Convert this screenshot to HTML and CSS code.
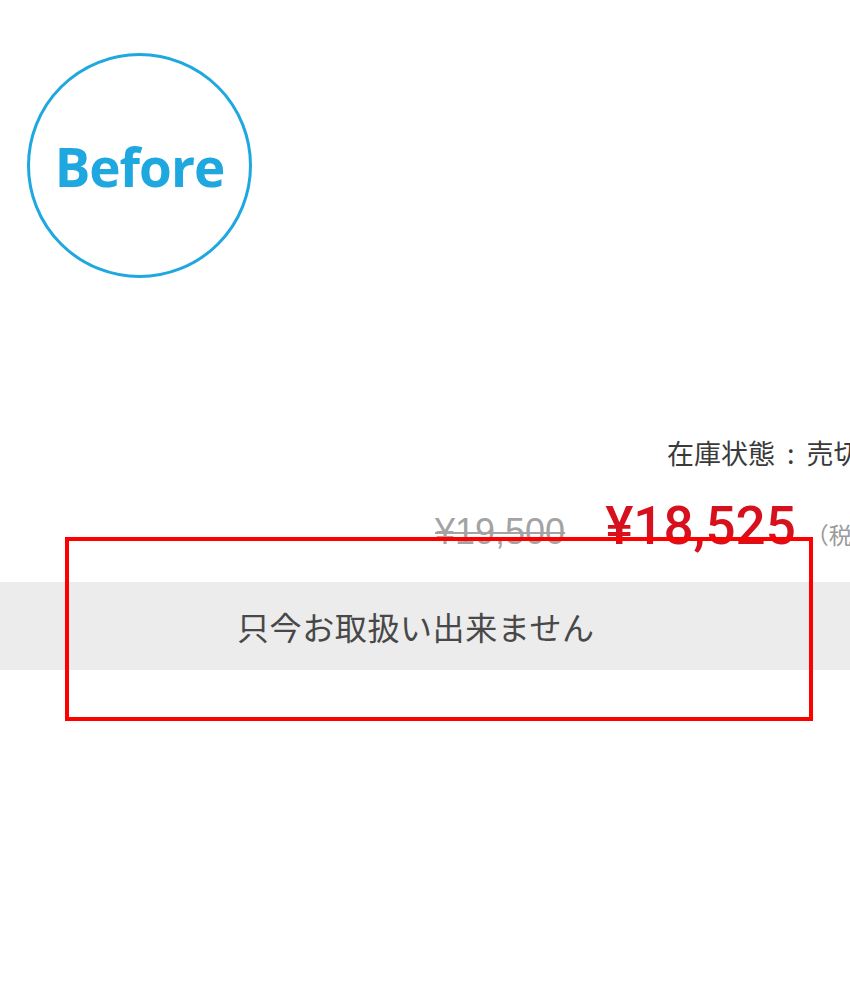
FILE: index.html
```html
<!DOCTYPE html>
<html lang="ja">

<head>
  <meta charset="UTF-8">
  <meta name="viewport" content="width=device-width, initial-scale=1.0">
  <title>Before</title>
  <link rel="stylesheet" href="styles.css">
</head>

<body>
  <div class="badge">
    <span class="badge_label">Before</span>
  </div>

  <div class="product-info">
    <p class="product-info_stock">在庫状態<span class="product-info_sep">:</span>売切れ</p>
    <div class="product-info_price">
      <span class="price_old">¥19,500</span>
      <span class="price_now">¥18,525</span>
      <span class="price_tax">（税込）</span>
    </div>
  </div>

  <div class="cart-bar">
    <p class="cart-bar_text">只今お取扱い出来ません</p>
  </div>

  <div class="highlight"></div>
</body>

</html>
```

FILE: styles.css
```css
* {
  box-sizing: border-box;
  padding: 0;
  margin: 0;
}

html {
  font-family: 'Noto Sans CJK JP', 'Noto Sans', sans-serif;
  color: #444444;
}

body {
  position: relative;
  width: 850px;
  height: 990px;
  overflow: hidden;
  background-color: #ffffff;
}

.badge {
  display: flex;
  align-items: center;
  justify-content: center;
  width: 225px;
  height: 225px;
  margin: 53px 0 0 27px;
  border: 3px solid #1fa8e0;
  border-radius: 50%;
}

.badge_label {
  font-family: 'Open Sans', sans-serif;
  font-weight: 700;
  font-size: 53px;
  letter-spacing: -1px;
  color: #1fa8e0;
  margin-top: 2px;
}

.product-info {
  margin-top: 155px;
  white-space: nowrap;
}

.product-info_stock {
  padding-left: 667px;
  font-size: 27px;
  line-height: 40px;
  color: #3a3a3a;
}

.product-info_sep {
  margin: 0 12px 0 12px;
}

.product-info_price {
  display: flex;
  align-items: baseline;
  margin-top: 22px;
  padding-left: 435px;
}

.price_old {
  font-family: 'Liberation Sans', sans-serif;
  font-size: 36px;
  color: #a3a3a3;
  text-decoration: line-through;
  text-decoration-thickness: 2px;
}

.price_now {
  margin-left: 40px;
  font-family: Roboto, sans-serif;
  font-weight: 500;
  font-size: 53px;
  color: #d7101d;
}

.price_tax {
  margin-left: 10px;
  font-size: 23px;
  color: #9a9a9a;
}

.cart-bar {
  display: flex;
  align-items: center;
  height: 88px;
  margin-top: 25px;
  padding-left: 237px;
  background-color: #ececec;
}

.cart-bar_text {
  font-size: 32px;
  letter-spacing: 0.6px;
  color: #484848;
}

.highlight {
  position: absolute;
  left: 65px;
  top: 537px;
  width: 748px;
  height: 184px;
  border: 4px solid #ff0000;
}
```
